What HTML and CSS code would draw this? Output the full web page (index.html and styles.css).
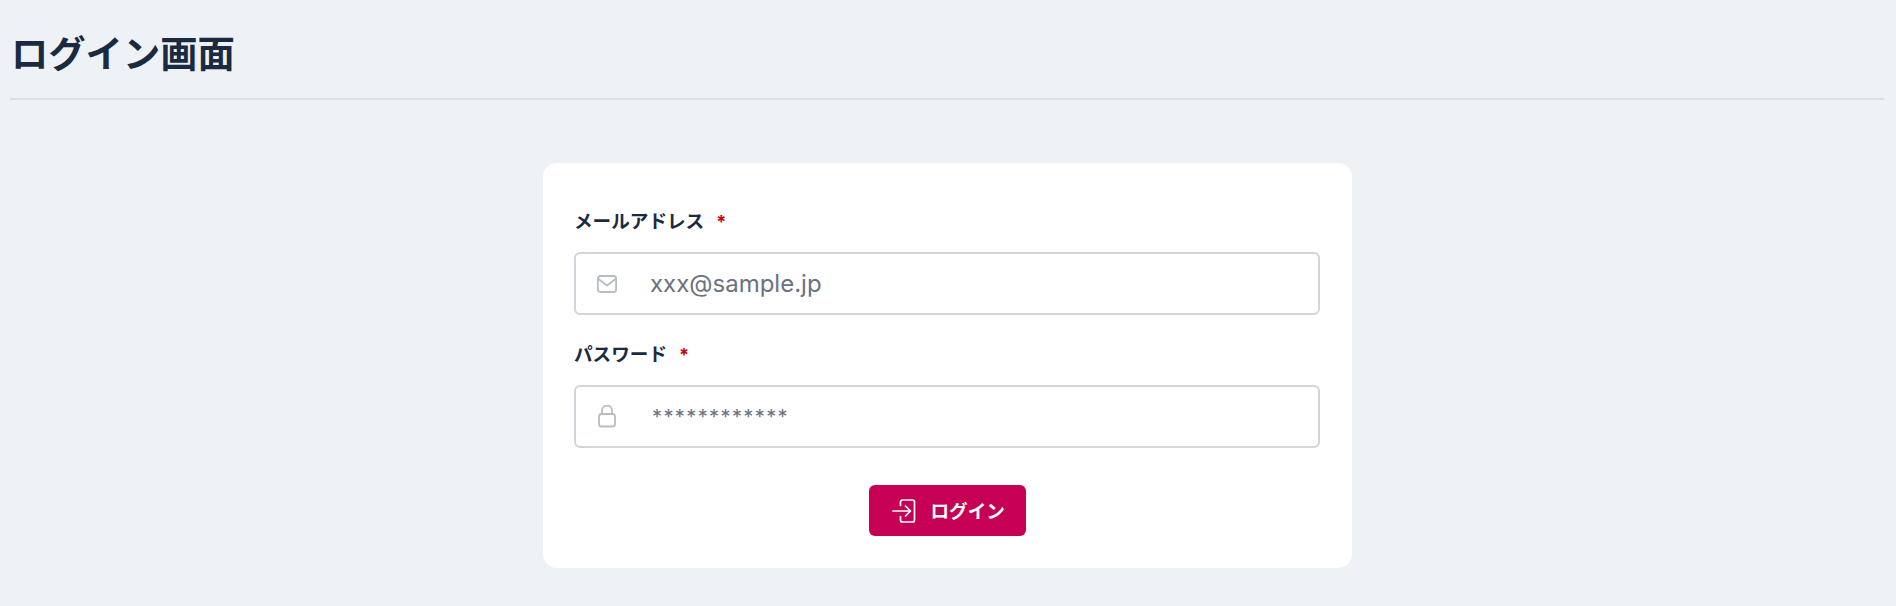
FILE: index.html
```html
<!DOCTYPE html>
<html lang="ja">
<head>
<meta charset="utf-8">
<title>ログイン画面</title>
<link rel="stylesheet" href="styles.css">
</head>
<body>
<header class="page-header">
  <h1 class="page-title">ログイン画面</h1>
</header>
<main class="card">
  <form class="form">
    <div class="field">
      <label class="label">メールアドレス<span class="req">*</span></label>
      <div class="input-box">
        <svg class="icon" width="20" height="18" viewBox="0 0 20 18" fill="none" stroke="#b8bcc4" stroke-width="1.8" stroke-linejoin="round" stroke-linecap="round"><rect x="0.9" y="1" width="18.2" height="16" rx="2.5"/><path d="M1.5 4 10 10.5 18.500 4"/></svg>
        <span class="placeholder">xxx@sample.jp</span>
      </div>
    </div>
    <div class="field">
      <label class="label">パスワード<span class="req">*</span></label>
      <div class="input-box">
        <svg class="icon" width="20" height="24" viewBox="0 1 20 24" fill="none" stroke="#b8bcc4" stroke-width="1.8" stroke-linejoin="round"><rect x="2" y="10" width="16" height="12.5" rx="2.5"/><path d="M5 10V6.500a5 5 0 0 1 10 0V10"/></svg>
        <span class="placeholder small">************</span>
      </div>
    </div>
    <div class="actions">
      <button type="button" class="btn">
        <svg width="24" height="24" viewBox="0 0 24 24" fill="none" stroke="#fff" stroke-width="1.7" stroke-linecap="round" stroke-linejoin="round"><path d="M8.500 6.500V3a2 2 0 0 1 2-2h10a2 2 0 0 1 2 2v18a2 2 0 0 1-2 2h-10a2 2 0 0 1-2-2v-3.500"/><path d="M1 12h17.500M13.500 7l5 5-5 5"/></svg>
        <span class="btn-text">ログイン</span>
      </button>
    </div>
  </form>
</main>
</body>
</html>
```
FILE: styles.css
```css
* { box-sizing: border-box; }
html, body { margin: 0; height: 100%; }
body {
  background: #eef1f6;
  color: #1a2a40;
  font-family: Inter, "Noto Sans CJK JP", sans-serif;
  padding: 0 11px 0 10px;
}
.page-header {
  height: 100px;
  margin-right: 1px;
  border-bottom: 2px solid #dadee4;
  display: flex;
  align-items: center;
  padding: 11px 0 0 1px;
}
.page-title { margin: 0; font-size: 37.3px; line-height: 1; font-weight: 700; }
.card {
  width: 809px;
  height: 405px;
  margin: 63px auto 0;
  background: #fff;
  border-radius: 14px;
  padding: 43px 32px 0 31px;
}
.field { margin-bottom: 24px; }
.label { display: block; font-size: 18.6px; line-height: 30px; font-weight: 700; margin-bottom: 15px; }
.req { color: #cc0000; margin-left: 12px; font-size: 18px; }
.input-box {
  height: 63px;
  border: 2px solid #d2d6dc;
  border-radius: 6px;
  display: flex;
  align-items: center;
  padding-left: 21px;
}
.icon { flex: none; }
.placeholder { margin-left: 33px; font-size: 24px; color: #6b7280; }
.placeholder.small { margin-left: 35px; font-size: 20px; letter-spacing: 1.4px; }
.actions { display: flex; justify-content: center; margin-top: 37px; }
.btn {
  width: 157px;
  height: 51px;
  border: 0;
  border-radius: 6px;
  background: #c60055;
  color: #fff;
  font: 700 18.6px Inter, "Noto Sans CJK JP", sans-serif;
  display: flex;
  align-items: center;
  gap: 15px;
  padding: 0 0 0 23px;
}
.btn-text { padding-bottom: 2px; }
```
